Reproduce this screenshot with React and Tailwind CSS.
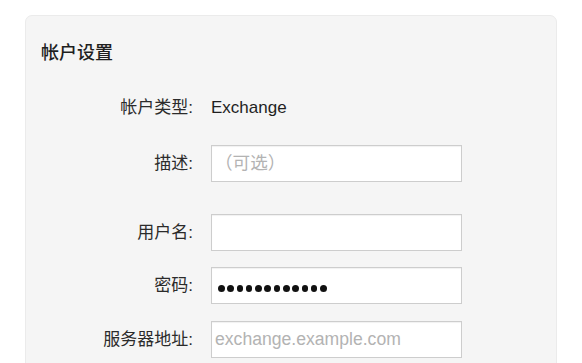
import React from "react";

const font = { fontFamily: '"Liberation Sans", "Noto Sans CJK SC", sans-serif' };

function Row({ label, children, className = "" }) {
  return (
    <div className={`flex items-center ${className}`}>
      <div className="w-[153px] shrink-0 text-right text-[17px] text-[#2b2b2b] pr-[1px]">
        {label}
      </div>
      <div className="ml-[17px]">{children}</div>
    </div>
  );
}

function Field({ placeholder, children }) {
  return (
    <div className="flex h-[37px] w-[251px] items-center border border-[#cdcdcd] bg-white pl-[3px] text-[17px] shadow-[inset_0_1px_1px_rgba(0,0,0,0.06)]">
      {children ? (
        children
      ) : (
        <input
          className="w-full bg-transparent text-[17.6px] text-[#222] outline-none placeholder:text-[#b3b3b3]"
          placeholder={placeholder}
          style={font}
        />
      )}
    </div>
  );
}

export default function App() {
  return (
    <div className="h-[363px] w-[582px] overflow-hidden bg-white" style={font}>
      <div className="ml-[25px] mt-[15px] h-[400px] w-[532px] rounded-[7px] border border-[#ebebeb] bg-[#f5f5f5] pl-[15px] pt-[25px]">
        <div className="h-[24px] text-[18px] font-medium leading-[24px] text-[#1f1f1f]">帐户设置</div>

        <Row label="帐户类型:" className="mt-[31px] h-[24px]">
          <span className="text-[17px] text-[#1f1f1f]">Exchange</span>
        </Row>

        <Row label="描述:" className="mt-[25px]">
          <Field placeholder="（可选）" />
        </Row>

        <Row label="用户名:" className="mt-[32px]">
          <Field placeholder="" />
        </Row>

        <Row label="密码:" className="mt-[16px]">
          <Field>
            <div className="ml-[3px] mt-[6px] flex gap-[2.8px]">
              {Array.from({ length: 12 }).map((_, i) => (
                <span key={i} className="h-[6.5px] w-[6.5px] rounded-full bg-[#111]" />
              ))}
            </div>
          </Field>
        </Row>

        <Row label="服务器地址:" className="mt-[17px]">
          <Field placeholder="exchange.example.com" />
        </Row>
      </div>
    </div>
  );
}
